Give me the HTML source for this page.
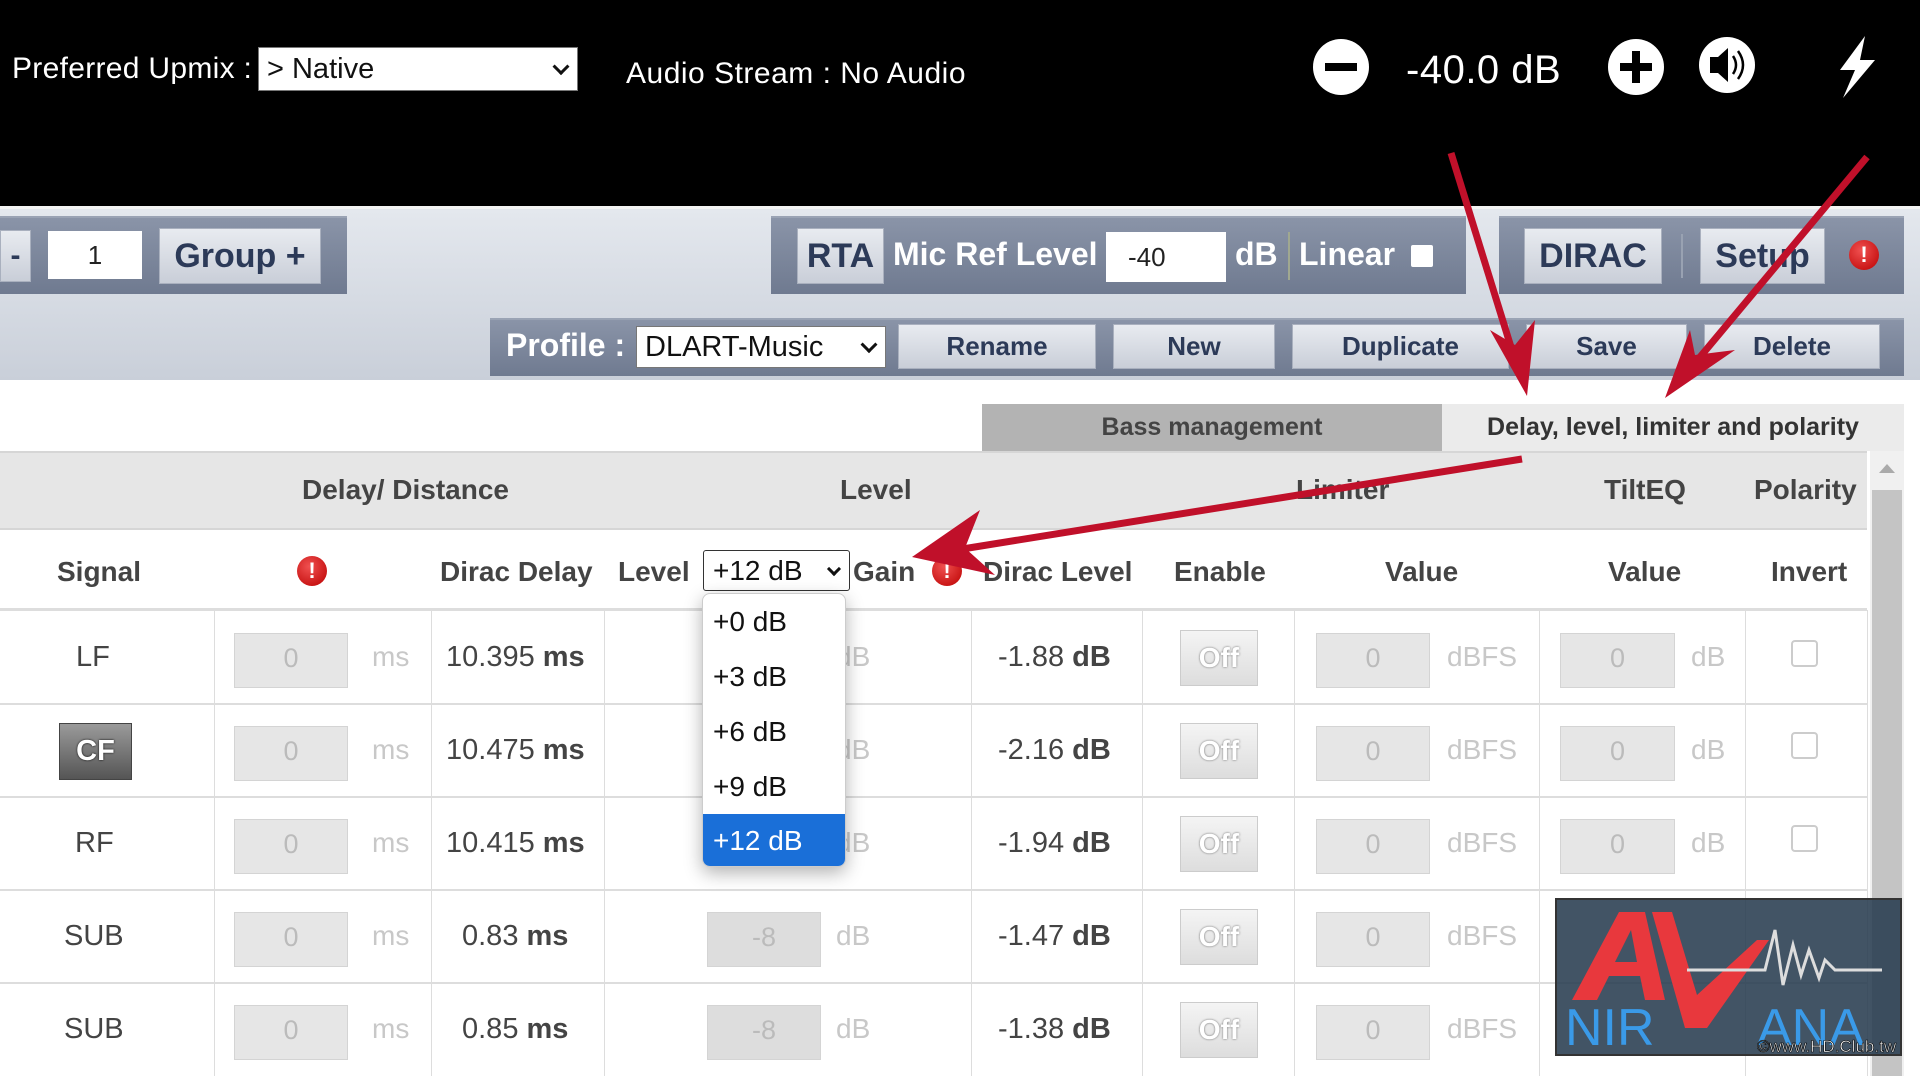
<!DOCTYPE html>
<html><head><meta charset="utf-8"><style>
*{box-sizing:border-box;margin:0;padding:0}
body{width:1920px;height:1076px;overflow:hidden;background:#fff;font-family:"Liberation Sans",Arial,sans-serif;position:relative}
.a{position:absolute}
.top{left:0;top:0;width:1920px;height:206px;background:#000}
.wt{color:#fff;font-size:29px}
.sel{background:#fff;color:#111;border:1px solid #777;font-size:28px;display:flex;align-items:center;padding-left:8px}
.sel .ch{position:absolute;right:10px;top:50%;width:12px;height:12px;border-right:3px solid #111;border-bottom:3px solid #111;transform:translateY(-70%) rotate(45deg)}
.bar{background:linear-gradient(#e4e8ee,#c9cfd9);left:0;top:206px;width:1920px;height:174px;border-top:3px solid #f4f4f4}
.pan{background:linear-gradient(#8a94a8,#6f7a90);border-top:2px solid #9aa3b4}
.btn{background:linear-gradient(#e8ebf0,#c9ced8);color:#2c3a58;font-weight:bold;display:flex;align-items:center;justify-content:center;border:1px solid #a9b0be}
.pb{font-size:26px;height:45px;top:324px}
.inp{background:#fff;color:#222;font-size:26px;display:flex;align-items:center}
.th{font-weight:bold;color:#444;font-size:28px;white-space:nowrap}
.vl{background:#ddd;height:1px}
.hl{background:#ddd;width:1px}
.dis{background:#e6e6e6;border:1px solid #d4d4d4;color:#bbb;font-size:27px;display:flex;align-items:center;justify-content:center;padding-bottom:4px}
.u{color:#c8c8c8;font-size:28px}
.tx{color:#444;font-size:29px;white-space:nowrap}
.off{width:78px;height:56px;background:linear-gradient(#f4f4f4,#ddd);border:1px solid #ccc;color:#fff;font-size:28px;font-weight:bold;text-shadow:0 0 2px #666;display:flex;align-items:center;justify-content:center}
.cb{width:27px;height:27px;border:2px solid #ccc;border-radius:4px;background:#fff}
.ex{width:30px;height:30px;border-radius:50%;background:radial-gradient(circle at 40% 35%,#f05050,#b00);color:#fff;font-weight:bold;font-size:22px;display:flex;align-items:center;justify-content:center}
</style></head><body>
<div class="a top"></div>
<div class="a wt" style="left:12px;top:52px;font-size:30px;letter-spacing:.3px">Preferred Upmix :</div>
<div class="a sel" style="left:258px;top:47px;width:320px;height:44px;font-size:29px">&gt; Native<span class="ch"></span></div>
<div class="a wt" style="left:626px;top:57px;font-size:30px;letter-spacing:.5px">Audio Stream : No Audio</div>
<svg class="a" style="left:1310px;top:36px" width="1600" height="70">
<circle cx="31" cy="31" r="28" fill="#fff"/><rect x="15" y="27" width="32" height="8" fill="#000"/>
<circle cx="326" cy="31" r="28" fill="#fff"/><rect x="310" y="27" width="32" height="8" fill="#000"/><rect x="322" y="15" width="8" height="32" fill="#000"/>
<circle cx="417" cy="29" r="28" fill="#fff"/><path d="M400 21h8l10-9v34l-10-9h-8z" fill="#000"/><path d="M423 20q6 9 0 18M428 15q10 14 0 28" stroke="#000" stroke-width="2.5" fill="none"/>
<path d="M555 0 L530 34 L545 34 L533 62 L565 24 L550 24 Z" fill="#fff"/>
</svg>
<div class="a wt" style="left:1406px;top:48px;font-size:40px;letter-spacing:.5px">-40.0 dB</div>

<div class="a bar"></div>
<div class="a pan" style="left:0;top:216px;width:347px;height:78px"></div>
<div class="a btn" style="left:0;top:230px;width:31px;height:52px;font-size:30px">-</div>
<div class="a inp" style="left:48px;top:231px;width:94px;height:48px;justify-content:center">1</div>
<div class="a btn" style="left:159px;top:228px;width:162px;height:56px;font-size:34px">Group +</div>
<div class="a pan" style="left:771px;top:216px;width:695px;height:78px"></div>
<div class="a btn" style="left:797px;top:228px;width:87px;height:56px;font-size:34px">RTA</div>
<div class="a" style="left:893px;top:236px;color:#fff;font-weight:bold;font-size:32px">Mic Ref Level</div>
<div class="a inp" style="left:1106px;top:232px;width:120px;height:50px;padding-left:22px">-40</div>
<div class="a" style="left:1235px;top:236px;color:#fff;font-weight:bold;font-size:32px">dB</div>
<div class="a" style="left:1288px;top:232px;width:2px;height:48px;background:#a0a890"></div>
<div class="a" style="left:1299px;top:236px;color:#fff;font-weight:bold;font-size:32px">Linear</div>
<div class="a" style="left:1411px;top:245px;width:22px;height:22px;background:#fff;border-radius:2px"></div>
<div class="a pan" style="left:1499px;top:216px;width:405px;height:78px"></div>
<div class="a btn" style="left:1524px;top:228px;width:138px;height:56px;font-size:34px">DIRAC</div>
<div class="a" style="left:1681px;top:234px;width:2px;height:44px;background:#99a2b2"></div>
<div class="a btn" style="left:1700px;top:228px;width:125px;height:56px;font-size:34px">Setup</div>
<div class="a ex" style="left:1849px;top:240px">!</div>
<div class="a pan" style="left:490px;top:318px;width:1414px;height:58px"></div>
<div class="a" style="left:506px;top:327px;color:#fff;font-weight:bold;font-size:32px">Profile :</div>
<div class="a sel" style="left:636px;top:326px;width:250px;height:42px;font-size:29px">DLART-Music<span class="ch"></span></div>
<div class="a btn pb" style="left:898px;width:198px">Rename</div>
<div class="a btn pb" style="left:1113px;width:162px">New</div>
<div class="a btn pb" style="left:1292px;width:217px">Duplicate</div>
<div class="a btn pb" style="left:1526px;width:161px">Save</div>
<div class="a btn pb" style="left:1704px;width:176px">Delete</div>

<div class="a" style="left:982px;top:404px;width:460px;height:47px;background:#b3b3b3;color:#444;font-weight:bold;font-size:25px;display:flex;align-items:center;justify-content:center">Bass management</div>
<div class="a" style="left:1442px;top:404px;width:462px;height:47px;background:#ebebeb;color:#333;font-weight:bold;font-size:25px;display:flex;align-items:center;justify-content:center">Delay, level, limiter and polarity</div>
<div class="a" style="left:0;top:451px;width:1867px;height:79px;background:#e6e6e6;border-top:2px solid #d6d6d6;border-bottom:2px solid #d6d6d6"></div>
<div class="a" style="left:1870px;top:451px;width:34px;height:625px;background:#f0f0f0"></div>
<div class="a" style="left:1872px;top:490px;width:30px;height:586px;background:#c4c4c4"></div>
<div class="a" style="left:1879px;top:464px;width:0;height:0;border-left:8px solid transparent;border-right:8px solid transparent;border-bottom:9px solid #aaa"></div>
<div class="a th" style="left:302px;top:474px">Delay/ Distance</div>
<div class="a th" style="left:840px;top:474px">Level</div>
<div class="a th" style="left:1296px;top:474px">Limiter</div>
<div class="a th" style="left:1604px;top:474px">TiltEQ</div>
<div class="a th" style="left:1754px;top:474px">Polarity</div>
<div class="a th" style="left:57px;top:556px">Signal</div>
<div class="a ex" style="left:297px;top:556px">!</div>
<div class="a th" style="left:440px;top:556px">Dirac Delay</div>
<div class="a th" style="left:618px;top:556px">Level</div>
<div class="a sel" style="left:703px;top:550px;width:147px;height:41px;font-size:28px;border-color:#333;border-radius:3px;padding-left:9px">+12 dB<span class="ch" style="width:10px;height:10px"></span></div>
<div class="a th" style="left:853px;top:556px">Gain</div>
<div class="a ex" style="left:932px;top:556px">!</div>
<div class="a th" style="left:983px;top:556px">Dirac Level</div>
<div class="a th" style="left:1174px;top:556px">Enable</div>
<div class="a th" style="left:1385px;top:556px">Value</div>
<div class="a th" style="left:1608px;top:556px">Value</div>
<div class="a th" style="left:1771px;top:556px">Invert</div>
<div class="a" style="left:0;top:608px;width:1867px;height:3px;background:#ddd"></div>

<div class="a hl" style="left:214px;top:610px;height:466px"></div>
<div class="a hl" style="left:431px;top:610px;height:466px"></div>
<div class="a hl" style="left:604px;top:610px;height:466px"></div>
<div class="a hl" style="left:971px;top:610px;height:466px"></div>
<div class="a hl" style="left:1142px;top:610px;height:466px"></div>
<div class="a hl" style="left:1294px;top:610px;height:466px"></div>
<div class="a hl" style="left:1539px;top:610px;height:466px"></div>
<div class="a hl" style="left:1745px;top:610px;height:466px"></div>
<div class="a hl" style="left:1867px;top:610px;height:466px"></div>
<div class="a vl" style="left:0;top:703px;width:1867px;height:2px"></div>
<div class="a vl" style="left:0;top:796px;width:1867px;height:2px"></div>
<div class="a vl" style="left:0;top:889px;width:1867px;height:2px"></div>
<div class="a vl" style="left:0;top:982px;width:1867px;height:2px"></div>

<div class="a tx" style="left:76px;top:641px">LF</div>
<div class="a" style="left:59px;top:723px;width:73px;height:57px;background:linear-gradient(#9a9a9a,#555);border:1px solid #444;color:#fff;font-weight:bold;font-size:29px;display:flex;align-items:center;justify-content:center;text-shadow:0 0 2px #000">CF</div>
<div class="a tx" style="left:75px;top:827px">RF</div>
<div class="a tx" style="left:64px;top:920px">SUB</div>
<div class="a tx" style="left:64px;top:1013px">SUB</div>

<div class="a dis" style="left:234px;top:633px;width:114px;height:55px">0</div>
<div class="a dis" style="left:234px;top:726px;width:114px;height:55px">0</div>
<div class="a dis" style="left:234px;top:819px;width:114px;height:55px">0</div>
<div class="a dis" style="left:234px;top:912px;width:114px;height:55px">0</div>
<div class="a dis" style="left:234px;top:1005px;width:114px;height:55px">0</div>
<div class="a u" style="left:372px;top:641px">ms</div>
<div class="a u" style="left:372px;top:734px">ms</div>
<div class="a u" style="left:372px;top:827px">ms</div>
<div class="a u" style="left:372px;top:920px">ms</div>
<div class="a u" style="left:372px;top:1013px">ms</div>

<div class="a tx" style="left:446px;top:641px">10.395 <b>ms</b></div>
<div class="a tx" style="left:446px;top:734px">10.475 <b>ms</b></div>
<div class="a tx" style="left:446px;top:827px">10.415 <b>ms</b></div>
<div class="a tx" style="left:462px;top:920px">0.83 <b>ms</b></div>
<div class="a tx" style="left:462px;top:1013px">0.85 <b>ms</b></div>

<div class="a u" style="left:836px;top:641px">dB</div>
<div class="a u" style="left:836px;top:734px">dB</div>
<div class="a u" style="left:836px;top:827px">dB</div>
<div class="a dis" style="left:707px;top:912px;width:114px;height:55px;background:#ddd">-8</div>
<div class="a dis" style="left:707px;top:1005px;width:114px;height:55px;background:#ddd">-8</div>
<div class="a u" style="left:836px;top:920px">dB</div>
<div class="a u" style="left:836px;top:1013px">dB</div>

<div class="a tx" style="left:998px;top:641px">-1.88 <b>dB</b></div>
<div class="a tx" style="left:998px;top:734px">-2.16 <b>dB</b></div>
<div class="a tx" style="left:998px;top:827px">-1.94 <b>dB</b></div>
<div class="a tx" style="left:998px;top:920px">-1.47 <b>dB</b></div>
<div class="a tx" style="left:998px;top:1013px">-1.38 <b>dB</b></div>

<div class="a off" style="left:1180px;top:630px">Off</div>
<div class="a off" style="left:1180px;top:723px">Off</div>
<div class="a off" style="left:1180px;top:816px">Off</div>
<div class="a off" style="left:1180px;top:909px">Off</div>
<div class="a off" style="left:1180px;top:1002px">Off</div>

<div class="a dis" style="left:1316px;top:633px;width:114px;height:55px">0</div>
<div class="a dis" style="left:1316px;top:726px;width:114px;height:55px">0</div>
<div class="a dis" style="left:1316px;top:819px;width:114px;height:55px">0</div>
<div class="a dis" style="left:1316px;top:912px;width:114px;height:55px">0</div>
<div class="a dis" style="left:1316px;top:1005px;width:114px;height:55px">0</div>
<div class="a u" style="left:1447px;top:641px">dBFS</div>
<div class="a u" style="left:1447px;top:734px">dBFS</div>
<div class="a u" style="left:1447px;top:827px">dBFS</div>
<div class="a u" style="left:1447px;top:920px">dBFS</div>
<div class="a u" style="left:1447px;top:1013px">dBFS</div>

<div class="a dis" style="left:1560px;top:633px;width:115px;height:55px">0</div>
<div class="a dis" style="left:1560px;top:726px;width:115px;height:55px">0</div>
<div class="a dis" style="left:1560px;top:819px;width:115px;height:55px">0</div>
<div class="a u" style="left:1691px;top:641px">dB</div>
<div class="a u" style="left:1691px;top:734px">dB</div>
<div class="a u" style="left:1691px;top:827px">dB</div>
<div class="a cb" style="left:1791px;top:640px"></div>
<div class="a cb" style="left:1791px;top:732px"></div>
<div class="a cb" style="left:1791px;top:825px"></div>

<div class="a" style="left:702px;top:593px;width:144px;height:274px;background:#fff;border:1px solid #ccc;border-radius:8px;box-shadow:0 6px 18px rgba(0,0,0,.3);overflow:hidden;font-size:28px;color:#111">
<div style="height:55px;line-height:55px;padding-left:10px">+0 dB</div>
<div style="height:55px;line-height:55px;padding-left:10px">+3 dB</div>
<div style="height:55px;line-height:55px;padding-left:10px">+6 dB</div>
<div style="height:55px;line-height:55px;padding-left:10px">+9 dB</div>
<div style="height:54px;line-height:54px;padding-left:10px;background:#1a6fd8;color:#fff">+12 dB</div>
</div>

<div class="a" style="left:1555px;top:898px;width:347px;height:158px;background:rgba(40,60,80,.88);border:2px solid #333;overflow:hidden">
<svg width="347" height="158" style="position:absolute;left:0;top:0">
<path d="M15 100 L62 12 L88 12 L108 100 L88 100 L83 76 L52 76 L40 100 Z M58 62 L80 62 L74 30 Z" fill="#e8383d"/>
<path d="M95 12 L115 12 L140 95 L200 40 L212 40 L150 128 L128 128 Z" fill="#e8383d"/>
<path d="M130 70 L208 70 L218 30 L226 85 L236 45 L244 75 L252 50 L262 78 L268 60 L278 70 L325 70" stroke="#ddd" stroke-width="3" fill="none"/>
<text x="8" y="145" font-family="Liberation Sans" font-size="52" fill="#3a9ae8">NIR</text>
<text x="200" y="145" font-family="Liberation Sans" font-size="52" fill="#3a9ae8">ANA</text>
<text x="200" y="152" font-family="Liberation Sans" font-size="17" fill="#fff" stroke="#000" stroke-width=".6">©www.HD.Club.tw</text>
</svg></div>

<svg class="a" style="left:0;top:0" width="1920" height="1076">
<g stroke="#c0102a" stroke-width="7" fill="#c0102a">
<line x1="1451" y1="153" x2="1515" y2="360"/>
<polygon points="1527,396 1490,330 1515,345 1535,320" stroke="none"/>
<line x1="1867" y1="157" x2="1685" y2="375"/>
<polygon points="1665,398 1690,330 1695,355 1735,350" stroke="none"/>
<line x1="1522" y1="459" x2="950" y2="551"/>
<polygon points="912,557 980,510 965,548 995,575" stroke="none"/>
</g></svg>
</body></html>
